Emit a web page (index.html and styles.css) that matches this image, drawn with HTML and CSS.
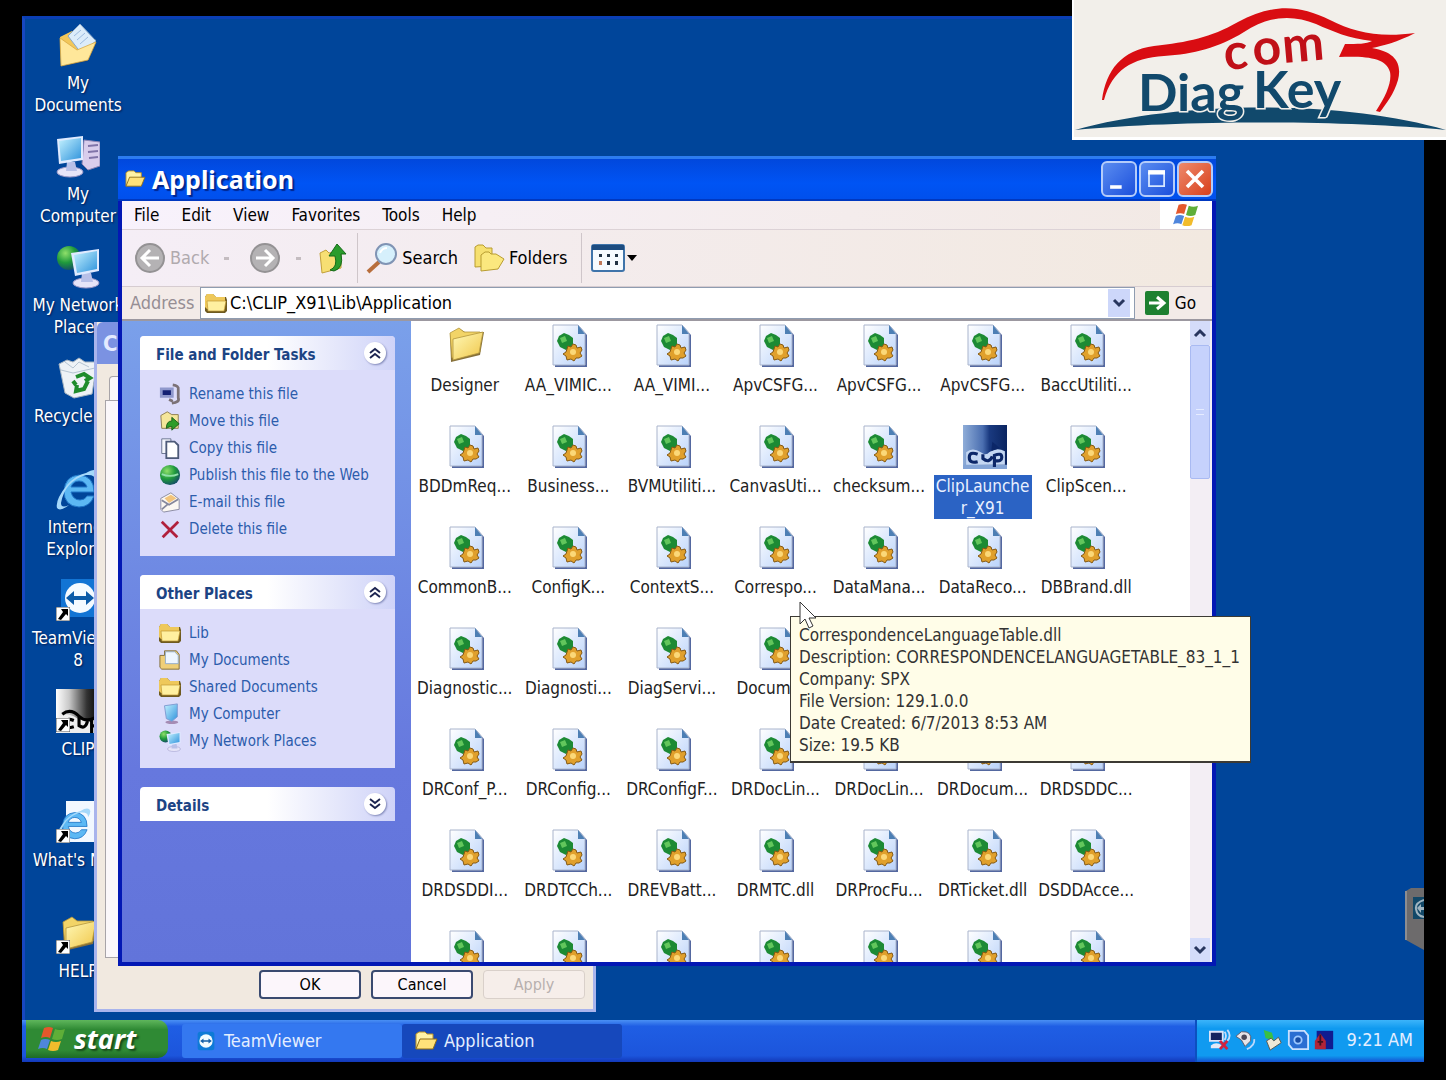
FILE: index.html
```
<!DOCTYPE html>
<html lang="en">
<head>
    <meta charset="UTF-8">
    <meta name="viewport" content="width=device-width, initial-scale=1.0">
    <title>Application</title>
    <link rel="stylesheet" href="styles.css">
</head>
<body>
    <!-- shared icons -->
    <svg class="defs" width="0" height="0" aria-hidden="true">
        <defs>
            <linearGradient id="gPage" x1="0" y1="0" x2="1" y2="1"><stop offset="0" stop-color="#ffffff"/><stop offset="1" stop-color="#b9d2fa"/></linearGradient>
            <linearGradient id="gFold" x1="0" y1="0" x2="1" y2="1"><stop offset="0" stop-color="#fff9b8"/><stop offset="1" stop-color="#f0c648"/></linearGradient>
            <linearGradient id="gScreen" x1="0" y1="0" x2="1" y2="1"><stop offset="0" stop-color="#c4f2ff"/><stop offset="1" stop-color="#2f93dc"/></linearGradient>
            <linearGradient id="gClip" x1="0" y1="0" x2="1" y2="0"><stop offset="0" stop-color="#ffffff"/><stop offset=".3" stop-color="#c8c8c8"/><stop offset=".7" stop-color="#333333"/><stop offset="1" stop-color="#000000"/></linearGradient>
            <linearGradient id="gClipSel" x1="0" y1="0" x2="1" y2="0"><stop offset="0" stop-color="#8fadd8"/><stop offset=".45" stop-color="#4a6eb0"/><stop offset=".6" stop-color="#1a3a80"/><stop offset="1" stop-color="#0a2460"/></linearGradient>
            <radialGradient id="gGlobe" cx=".35" cy=".3" r=".8"><stop offset="0" stop-color="#8fe06a"/><stop offset=".5" stop-color="#1f9a3c"/><stop offset="1" stop-color="#123f6e"/></radialGradient>
        </defs>
        <symbol id="dll" viewBox="0 0 36 44">
            <path d="M3 3h25l7 8v32H3z" fill="#5468a0"/>
            <path d="M1 1h25l7 8v32H1z" fill="url(#gPage)" stroke="#a9b4cc"/>
            <path d="M26 1l7 9h-7z" fill="#4d7fb4"/>
            <path d="M5 17l2-5 5-3 5 2 4 3v6l-2 4-5 2-6-3z" fill="#1c8a34"/>
            <path d="M8 14l5-2 2 5-5 2z" fill="#62c65c"/>
            <path d="M16 22l3 1 2-3 3 1 1 3 4-1 1 3-2 3 2 3-3 2-3 0-2 3-3-2-4 1-1-4-3-2 3-2z" fill="#e0a02c" stroke="#855a14" stroke-width="1"/>
            <circle cx="21" cy="28" r="3" fill="#fbd878"/>
        </symbol>
        <symbol id="folder" viewBox="0 0 36 36">
            <path d="M1 7l10-5 5 3 19 0-4 23-29 7z" fill="#86703a"/>
            <path d="M1 6l9-5 5 4 16 0 0 20-28 6z" fill="#f2d467" stroke="#b3953c" stroke-width=".8"/>
            <path d="M4 12l30-7-4 21-26 7z" fill="url(#gFold)" stroke="#b3953c" stroke-width=".8"/>
        </symbol>
        <symbol id="folderSm" viewBox="0 0 24 20">
            <path d="M1 4l2-3h6l3 3h10l1 3v11l-2 2H3l-2-2z" fill="#6e5a20"/>
            <path d="M1 4l2-3h6l3 3h9v12H3l-2-2z" fill="#eec85a"/>
            <path d="M3 8h19l-2 10H4z" fill="#fff0a0" stroke="#c09a34" stroke-width=".7"/>
        </symbol>
        <symbol id="openFolder" viewBox="0 0 24 20">
            <path d="M2 18V3l3-2h6l2 2h6v5" fill="#fff2a6" stroke="#bb9224"/>
            <path d="M2 18L6 8h17l-4 10z" fill="#ffe27a" stroke="#8d6c18"/>
        </symbol>
        <symbol id="envelope" viewBox="0 0 40 44">
            <path d="M3 15l20-13 15 18-8 18-25 5z" fill="#20325c" opacity=".6"/>
            <path d="M2 14L14 8l24 9-8 19-27 6z" fill="#f2c75a"/>
            <path d="M10 13L22 1l16 17-15 12z" fill="#dcecfa" stroke="#8aa8c8"/>
            <path d="M16 13l7-6M19 17l8-7M22 21l8-7" stroke="#9dbbe0"/>
            <path d="M2 15l17 12L38 19l-8 18-27 6z" fill="#ffe79a" stroke="#d9a943" stroke-width=".8"/>
        </symbol>
        <symbol id="computer" viewBox="0 0 44 44">
            <path d="M28 6l16 2v24l-12 4-6-6z" fill="#d9cdec" stroke="#8c84b4"/>
            <path d="M32 12l10-1M32 18l10-1M33 24l9-1" stroke="#8074a8" stroke-width="2"/>
            <ellipse cx="14" cy="38" rx="13" ry="5" fill="#e6e4f8" stroke="#9a98c8"/>
            <path d="M11 28h8l2 9h-11z" fill="#b8c0e8"/>
            <path d="M1 5l26-3v24L3 30z" fill="#dfeaff"/>
            <path d="M3 7l22-3v20L5 27z" fill="url(#gScreen)"/>
        </symbol>
        <symbol id="network" viewBox="0 0 44 44">
            <circle cx="13" cy="13" r="12" fill="url(#gGlobe)"/>
            <ellipse cx="30" cy="38" rx="13" ry="5" fill="#e6e4f8" stroke="#9a98c8"/>
            <path d="M26 28h9l2 9H25z" fill="#b8c0e8"/>
            <path d="M15 8l28-4v22l-24 5z" fill="#dfeaff"/>
            <path d="M18 10l23-4v18l-20 4z" fill="url(#gScreen)"/>
        </symbol>
        <symbol id="bin" viewBox="0 0 44 44">
            <path d="M3 8l8-4 6 2 6-4 6 4 12 0-5 32-18 4-9-5z" fill="#eef2f6" stroke="#a4b2c0"/>
            <path d="M5 14l12 3 22-5M9 6l8 6 6-6 10 5" stroke="#b5c4d2" fill="none"/>
            <path d="M20 21l8-3 6 4-5 3M32 25l-4 8-8 2 1-6M20 29l-3-4" fill="none" stroke="#1f8c2c" stroke-width="4"/>
        </symbol>
        <symbol id="ie" viewBox="0 0 44 44">
            <path d="M38 25H15q2 8 9 8 5 0 7-4h7q-4 11-15 11Q8 39 8 24 9 9 23 8q15 1 15 17zM15 20h16q-2-6-8-6t-8 6z" fill="#5cb8f4" stroke="#2076c8"/>
            <path d="M30 6q10-6 12 0 0 4-3 8 1-7-9-6Q9 14 5 36q0 6 8 2-9 7-12 3Q-1 33 11 18 20 8 30 6z" fill="#a5d8fa"/>
        </symbol>
        <symbol id="teamviewer" viewBox="0 0 44 44">
            <rect x="5" y="1" width="38" height="38" fill="#1274d4"/>
            <circle cx="24" cy="20" r="15" fill="#f4faff"/>
            <path d="M10 20l8-7v5h12v-5l8 7-8 7v-5H18v5z" fill="#0c5ba8"/>
        </symbol>
        <symbol id="arrow" viewBox="0 0 14 14">
            <path d="M0 0h14v14H0z" fill="#fff" stroke="#555"/>
            <path d="M5 2h7v7l-2-2-5 6-3-1 5-7z" fill="#000"/>
        </symbol>
        <symbol id="clip" viewBox="0 0 42 42">
            <path d="M0 0h42v42H0z" fill="url(#gClip)"/>
            <path d="M0 30q8-10 20-2 8 4 22 0v14H0z" fill="#eee"/>
            <path d="M6 24q8-6 16 2t20-2M17 30q-8-3-9 3t9 3M22 26v9q6 4 8-4M34 42V29q6-3 7 2 0 5-6 4" fill="none" stroke="#000" stroke-width="3"/>
        </symbol>
        <symbol id="clipSel" viewBox="0 0 42 42">
            <path d="M0 0h42v42H0z" fill="url(#gClipSel)"/>
            <path d="M0 38h42v4H0z" fill="#83a4d6"/>
            <path d="M3 26q6-5 14 0 5 4 8 0 7-5 15-1v13H3z" fill="#c4d7f2"/>
            <path d="M14 28q-8-3-8 3t8 4M19 28v4q6 5 9-2M30 40V29q7-3 7 2 0 4-6 3" fill="none" stroke="#0c2768" stroke-width="3"/>
            <path d="M28 16l7 6-8 3z" fill="#0c2768"/>
        </symbol>
        <symbol id="flag" viewBox="0 0 28 26">
            <path d="M6 2q5-2 9 0l-3 10q-4-2-9 0z" fill="#e4582c"/>
            <path d="M17 3q5 2 10 0l-3 10q-5 2-10 0z" fill="#5fae38"/>
            <path d="M3 14q4-2 9 0l-3 9q-4-2-9 0z" fill="#4f86dc"/>
            <path d="M13 15q5 2 10 0l-3 9q-5 2-10 0z" fill="#f2bc2c"/>
        </symbol>
        <symbol id="up" viewBox="0 0 20 20"><path d="M5 10l5-4 5 4M5 15l5-4 5 4" fill="none" stroke="#1c2450" stroke-width="2"/></symbol>
        <symbol id="chev" viewBox="0 0 16 16"><path d="M3 5l5 5 5-5" fill="none" stroke="#28365e" stroke-width="3"/></symbol>
    </svg>

    <div class="screen">
        <main class="desktop">
            <ul class="shortcuts">
                <li><svg><use href="#envelope"/></svg><span>My Documents</span></li>
                <li><svg><use href="#computer"/></svg><span>My Computer</span></li>
                <li><svg><use href="#network"/></svg><span>My Network Places</span></li>
                <li><svg><use href="#bin"/></svg><span>Recycle Bin</span></li>
                <li><svg><use href="#ie"/></svg><span>Internet Explorer</span></li>
                <li><svg viewBox="0 0 44 44"><use href="#teamviewer"/><use href="#arrow" y="29" width="14" height="14"/></svg><span>TeamViewer 8</span></li>
                <li><svg viewBox="0 0 44 44"><use href="#clip" width="44" height="44"/><use href="#arrow" y="29" width="14" height="14"/></svg><span>CLIP</span></li>
                <li><svg viewBox="0 0 44 44"><path d="M10 1h28l5 5v36H10z" fill="#f2f8ff"/><use href="#ie" y="6" width="36" height="36"/><use href="#arrow" y="29" width="14" height="14"/></svg><span>What's New</span></li>
                <li><svg viewBox="0 0 44 44"><use href="#folder" x="6" y="5" width="36" height="36"/><use href="#arrow" y="29" width="14" height="14"/></svg><span>HELP</span></li>
            </ul>

            <!-- dialog behind the explorer window -->
            <section class="dialog">
                <h2 class="dialog-title">C</h2>
                <div class="dialog-body">
                    <div class="tab"></div>
                    <div class="page"></div>
                    <div class="dialog-buttons">
                        <button type="button">OK</button>
                        <button type="button">Cancel</button>
                        <button type="button" disabled>Apply</button>
                    </div>
                </div>
            </section>

            <section class="window">
                <header class="titlebar">
                    <svg class="title-icon"><use href="#openFolder"/></svg>
                    <h1>Application</h1>
                    <button type="button" class="cap" aria-label="Minimize"><svg viewBox="0 0 36 36"><path d="M8 25h13v4H8z" fill="#fff"/></svg></button>
                    <button type="button" class="cap" aria-label="Maximize"><svg viewBox="0 0 36 36"><path d="M9 11h17v15H9z" fill="none" stroke="#d6e6ff" stroke-width="2"/><path d="M8 8h19v5H8z" fill="#fff"/></svg></button>
                    <button type="button" class="cap close" aria-label="Close"><svg viewBox="0 0 36 36"><path d="M9 9l18 18M27 9L9 27" stroke="#fff" stroke-width="4"/></svg></button>
                </header>

                <nav class="menubar">
                    <button type="button">File</button>
                    <button type="button">Edit</button>
                    <button type="button">View</button>
                    <button type="button">Favorites</button>
                    <button type="button">Tools</button>
                    <button type="button">Help</button>
                    <span class="brand"><svg><use href="#flag"/></svg></span>
                </nav>

                <div class="toolbar">
                    <button type="button" class="back" disabled>
                        <svg class="ico32" viewBox="0 0 32 32"><circle cx="16" cy="16" r="14" fill="#b4b2b4" stroke="#949294" stroke-width="2"/><path d="M25 16H9M16 8l-8 8 8 8" fill="none" stroke="#fff" stroke-width="3"/></svg>
                        Back <i></i>
                    </button>
                    <button type="button" class="forward" disabled aria-label="Forward">
                        <svg class="ico32" viewBox="0 0 32 32"><circle cx="16" cy="16" r="14" fill="#b4b2b4" stroke="#949294" stroke-width="2"/><path d="M7 16h16M16 8l8 8-8 8" fill="none" stroke="#fff" stroke-width="3"/></svg>
                        <i></i>
                    </button>
                    <button type="button" class="up" aria-label="Up">
                        <svg class="ico32" viewBox="0 0 32 32"><path d="M3 11l6-3 3 3 12-2v17L5 31z" fill="#f7df73" stroke="#c2a03a"/><path d="M13 28q8-3 5-14h-6L20 2l9 10h-5q3 14-7 17z" fill="#2a9c2c" stroke="#146a18"/></svg>
                    </button>
                    <span class="sep"></span>
                    <button type="button" class="search">
                        <svg class="ico32" viewBox="0 0 32 32"><path d="M13 20L2 30" stroke="#b86e3c" stroke-width="4"/><circle cx="20" cy="12" r="10" fill="#d6f0fc" stroke="#8094b4" stroke-width="2"/><path d="M14 11q2-5 7-5" fill="none" stroke="#fff" stroke-width="2"/></svg>
                        Search
                    </button>
                    <button type="button" class="folders">
                        <svg class="ico32" viewBox="0 0 32 32"><path d="M2 25V5l3-2h5l3 3h6v18z" fill="#f6e070" stroke="#b89c30"/><path d="M8 29V13l4-3h4l2 2h5l8 5-6 10z" fill="#fbe87e" stroke="#b89c30"/></svg>
                        Folders
                    </button>
                    <span class="sep"></span>
                    <button type="button" class="views" aria-label="Views">
                        <svg class="views-icon" viewBox="0 0 46 28"><rect x="1" y="1" width="32" height="26" rx="2" fill="#f6fbff" stroke="#3f74aa" stroke-width="2"/><path d="M1 1h32v5H1z" fill="#1d4c80"/><path d="M8 10h3v3H8zM16 10h3v3h-3zM24 10h3v3h-3zM16 17h3v4h-3zM24 17h3v4h-3z" fill="#234"/><path d="M8 17h3v4H8z" fill="#c07858"/><path d="M36 11h10l-5 6z" fill="#000"/></svg>
                    </button>
                </div>

                <form class="address">
                    <label for="path">Address</label>
                    <div class="address-box">
                        <svg class="ico24"><use href="#folderSm"/></svg>
                        <input type="text" id="path" value="C:\CLIP_X91\Lib\Application">
                        <button type="button" class="drop" aria-label="Show addresses"><svg><use href="#chev"/></svg></button>
                    </div>
                    <button type="button" class="go"><svg viewBox="0 0 24 24"><rect width="24" height="24" rx="2" fill="#1d8030"/><path d="M4 12h13M12 6l7 6-7 6" fill="none" stroke="#fff" stroke-width="3"/></svg>Go</button>
                </form>

                <div class="content">
                    <aside class="sidebar">
                        <section class="group">
                            <header><h2>File and Folder Tasks</h2><button type="button" aria-label="Collapse"><svg><use href="#up"/></svg></button></header>
                            <ul>
                                <li><svg viewBox="0 0 24 24"><path d="M1 5h15v11H1z" fill="#8f98cc"/><path d="M4 8h9v5H4z" fill="#142074"/><path d="M15 2q7 1 6 5v9q2 5-7 6M15 20l-4-2" fill="none" stroke="#7c7276" stroke-width="3"/></svg><a href="#">Rename this file</a></li>
                                <li><svg viewBox="0 0 24 24"><path d="M2 6l7-4 5 3h7v15H3z" fill="#f5e69a" stroke="#8a7a4c"/><path d="M8 20q0-8 6-8V8l8 7-8 7v-4q-3 0-6 2z" fill="#2f9c28" stroke="#1b5c18"/></svg><a href="#">Move this file</a></li>
                                <li><svg viewBox="0 0 24 24"><path d="M3 2h10v16H3z" fill="#f4f6fc" stroke="#65708c"/><path d="M8 5h9l4 4v14H8z" fill="#fff" stroke="#4d5a78" stroke-width="2"/></svg><a href="#">Copy this file</a></li>
                                <li><svg viewBox="0 0 24 24"><circle cx="12" cy="12" r="11" fill="url(#gGlobe)"/><path d="M3 11q9 4 18 0" stroke="#8fe0a8" fill="none" stroke-width="2"/></svg><a href="#">Publish this file to the Web</a></li>
                                <li><svg viewBox="0 0 24 24"><path d="M2 8l11-6 9 7v11L5 23l-3-3z" fill="#fbf7f2" stroke="#85879c"/><path d="M6 8l7-4 6 4-8 5z" fill="#f2c47c"/><path d="M3 10l8 5 10-6M3 20l7-6" fill="none" stroke="#85879c" stroke-width="2"/></svg><a href="#">E-mail this file</a></li>
                                <li><svg viewBox="0 0 24 24"><path d="M3 4l17 17M21 4L4 21" stroke="#b0203c" stroke-width="3"/></svg><a href="#">Delete this file</a></li>
                            </ul>
                        </section>
                        <section class="group">
                            <header><h2>Other Places</h2><button type="button" aria-label="Collapse"><svg><use href="#up"/></svg></button></header>
                            <ul>
                                <li><svg><use href="#folderSm"/></svg><a href="#">Lib</a></li>
                                <li><svg viewBox="0 0 24 24"><path d="M1 7h5V2h13l3 4v16H3l-2-2z" fill="#efcf78" stroke="#7f6a34"/><path d="M7 3h10l4 4v9H7z" fill="#eef6ff" stroke="#8ea8c8"/></svg><a href="#">My Documents</a></li>
                                <li><svg><use href="#folderSm"/></svg><a href="#">Shared Documents</a></li>
                                <li><svg viewBox="0 0 24 24"><ellipse cx="14" cy="21" rx="7" ry="2" fill="#a58cb4"/><path d="M6 3l14-2v14l-6 5-6-3z" fill="url(#gScreen)" stroke="#7c98d0"/></svg><a href="#">My Computer</a></li>
                                <li><svg><use href="#network"/></svg><a href="#">My Network Places</a></li>
                            </ul>
                        </section>
                        <section class="group">
                            <header><h2>Details</h2><button type="button" class="down" aria-label="Expand"><svg><use href="#up"/></svg></button></header>
                        </section>
                    </aside>

                    <ul class="files">
                        <li><svg class="dir"><use href="#folder"/></svg><span>Designer</span></li>
                        <li><svg><use href="#dll"/></svg><span>AA_VIMIC...</span></li>
                        <li><svg><use href="#dll"/></svg><span>AA_VIMI...</span></li>
                        <li><svg><use href="#dll"/></svg><span>ApvCSFG...</span></li>
                        <li><svg><use href="#dll"/></svg><span>ApvCSFG...</span></li>
                        <li><svg><use href="#dll"/></svg><span>ApvCSFG...</span></li>
                        <li><svg><use href="#dll"/></svg><span>BaccUtiliti...</span></li>

                        <li><svg><use href="#dll"/></svg><span>BDDmReq...</span></li>
                        <li><svg><use href="#dll"/></svg><span>Business...</span></li>
                        <li><svg><use href="#dll"/></svg><span>BVMUtiliti...</span></li>
                        <li><svg><use href="#dll"/></svg><span>CanvasUti...</span></li>
                        <li><svg><use href="#dll"/></svg><span>checksum...</span></li>
                        <li class="selected"><svg><use href="#clipSel"/></svg><span>ClipLaunche<br>r_X91</span></li>
                        <li><svg><use href="#dll"/></svg><span>ClipScen...</span></li>

                        <li><svg><use href="#dll"/></svg><span>CommonB...</span></li>
                        <li><svg><use href="#dll"/></svg><span>ConfigK...</span></li>
                        <li><svg><use href="#dll"/></svg><span>ContextS...</span></li>
                        <li><svg><use href="#dll"/></svg><span>Correspo...</span></li>
                        <li><svg><use href="#dll"/></svg><span>DataMana...</span></li>
                        <li><svg><use href="#dll"/></svg><span>DataReco...</span></li>
                        <li><svg><use href="#dll"/></svg><span>DBBrand.dll</span></li>

                        <li><svg><use href="#dll"/></svg><span>Diagnostic...</span></li>
                        <li><svg><use href="#dll"/></svg><span>Diagnosti...</span></li>
                        <li><svg><use href="#dll"/></svg><span>DiagServi...</span></li>
                        <li><svg><use href="#dll"/></svg><span>Docume...</span></li>
                        <li><svg><use href="#dll"/></svg></li>
                        <li><svg><use href="#dll"/></svg></li>
                        <li><svg><use href="#dll"/></svg></li>

                        <li><svg><use href="#dll"/></svg><span>DRConf_P...</span></li>
                        <li><svg><use href="#dll"/></svg><span>DRConfig...</span></li>
                        <li><svg><use href="#dll"/></svg><span>DRConfigF...</span></li>
                        <li><svg><use href="#dll"/></svg><span>DRDocLin...</span></li>
                        <li><svg><use href="#dll"/></svg><span>DRDocLin...</span></li>
                        <li><svg><use href="#dll"/></svg><span>DRDocum...</span></li>
                        <li><svg><use href="#dll"/></svg><span>DRDSDDC...</span></li>

                        <li><svg><use href="#dll"/></svg><span>DRDSDDI...</span></li>
                        <li><svg><use href="#dll"/></svg><span>DRDTCCh...</span></li>
                        <li><svg><use href="#dll"/></svg><span>DREVBatt...</span></li>
                        <li><svg><use href="#dll"/></svg><span>DRMTC.dll</span></li>
                        <li><svg><use href="#dll"/></svg><span>DRProcFu...</span></li>
                        <li><svg><use href="#dll"/></svg><span>DRTicket.dll</span></li>
                        <li><svg><use href="#dll"/></svg><span>DSDDAcce...</span></li>

                        <li><svg><use href="#dll"/></svg></li>
                        <li><svg><use href="#dll"/></svg></li>
                        <li><svg><use href="#dll"/></svg></li>
                        <li><svg><use href="#dll"/></svg></li>
                        <li><svg><use href="#dll"/></svg></li>
                        <li><svg><use href="#dll"/></svg></li>
                        <li><svg><use href="#dll"/></svg></li>
                    </ul>

                    <div class="scrollbar">
                        <button type="button" class="scroll-up" aria-label="Scroll up"><svg><use href="#chev"/></svg></button>
                        <div class="thumb"><i></i></div>
                        <button type="button" class="scroll-down" aria-label="Scroll down"><svg><use href="#chev"/></svg></button>
                    </div>
                </div>
            </section>

            <div class="tooltip" role="tooltip">
                CorrespondenceLanguageTable.dll<br>
                Description: CORRESPONDENCELANGUAGETABLE_83_1_1<br>
                Company: SPX<br>
                File Version: 129.1.0.0<br>
                Date Created: 6/7/2013 8:53 AM<br>
                Size: 19.5 KB
            </div>
            <svg class="cursor" viewBox="0 0 18 28"><path d="M1 1v22l5-5 4 9 4-2-4-8h7z" fill="#fff" stroke="#333" stroke-width="1"/></svg>
            <svg class="side-tab" viewBox="0 0 20 62"><path d="M2 3L7 0h13v62L2 52z" fill="#6d6b6c"/><path d="M2 3v49" stroke="#8d8d90" stroke-width="2"/><path d="M9 9h11v22H9z" fill="#124868"/><path d="M20 12q-9 3-8 9 1 7 8 8" fill="none" stroke="#9fb4c0" stroke-width="2"/><path d="M13 20l4-4v3h3v3h-3v3z" fill="#9fb4c0"/></svg>
        </main>

        <footer class="taskbar">
            <button type="button" class="start"><svg><use href="#flag"/></svg>start</button>
            <button type="button" class="task"><svg viewBox="0 0 24 24"><rect x="2" y="1" width="20" height="22" rx="3" fill="#0e7ad6"/><circle cx="12" cy="12" r="8" fill="#f2fbff"/><path d="M5 12l4-3v2h6V9l4 3-4 3v-2H9v2z" fill="#1560a8"/></svg>TeamViewer</button>
            <button type="button" class="task active"><svg><use href="#openFolder"/></svg>Application</button>
            <div class="tray">
                <svg viewBox="0 0 24 24"><path d="M1 3h14v10H1z" fill="#142460" stroke="#dde4f8" stroke-width="2"/><path d="M2 18q6-5 12 0v3H2z" fill="#e4e8f6"/><path d="M17 3q3 4 0 9M20 1q5 6 0 12" fill="none" stroke="#c8dcf8" stroke-width="2"/><path d="M12 13l8 9M20 13l-8 9" stroke="#d02440" stroke-width="3"/></svg>
                <svg viewBox="0 0 24 24"><path d="M1 8l6-5q12-1 10 10l-6 6-4-7z" fill="#e8e4e8" stroke="#5c5868"/><circle cx="10" cy="9" r="3" fill="#4c4858"/><path d="M21 11q1 7-8 11" fill="none" stroke="#bcd8fc" stroke-width="2"/></svg>
                <svg viewBox="0 0 24 24"><path d="M3 1l9 3 2 8-9-2z" fill="#3ac044"/><path d="M6 13l5-3 3 3 5-4 3 6-12 8z" fill="#eee9d8" stroke="#5c5648"/></svg>
                <svg viewBox="0 0 24 24"><path d="M2 2h17l4 5v15H6l-4-5z" fill="#2a6ed2" stroke="#c8e0ff" stroke-width="2"/><circle cx="12" cy="12" r="4" fill="#184ca4" stroke="#9cc8ff" stroke-width="2"/></svg>
                <svg viewBox="0 0 24 24"><path d="M4 2h18v20H4z" fill="#101c90"/><path d="M2 22v-9l6-8 6 8v9z" fill="#b02438"/><path d="M8 6v12M5 14h6" stroke="#401020" stroke-width="2"/></svg>
                <time>9:21 AM</time>
            </div>
        </footer>
    </div>

    <!-- channel logo -->
    <svg class="logo" viewBox="0 0 374 140" role="img" aria-label="DiagKey com">
        <path d="M0 0h374v140H0z" fill="#fff"/>
        <path d="M2 0h372v137H2z" fill="#f2efea"/>
        <path d="M30 100C34 70 50 50 82 46C116 42 138 38 166 22C200 4 226 4 258 20C282 32 306 38 343 33C326 42 310 46 300 48C324 52 330 64 326 80C322 94 314 104 308 112L304 111C314 96 320 82 318 72C314 58 296 56 267 57L273 44C286 44 294 44 300 41C276 38 262 32 244 24C220 14 196 16 172 32C146 48 122 54 92 56C60 58 40 70 32 100z" fill="#d90d12"/>
        <path d="M3 130C110 100 270 100 374 130C270 120 110 120 3 130z" fill="#11496c"/>
        <g class="logo-com" transform="rotate(-5 154 70)">
            <text x="153" y="70">c</text>
            <text x="182" y="68">o</text>
            <text x="212" y="68">m</text>
        </g>
        <text x="66" y="111" class="logo-name">Diag</text>
        <text x="181" y="108" class="logo-name">Key</text>
    </svg>
</body>
</html>
```

FILE: styles.css
```
* {
    box-sizing: border-box;
}
html, body {
    height: 100%;
}
body {
    margin: 0;
    background: #000;
    font-family: "DejaVu Sans Condensed", "Noto Sans", sans-serif;
    font-size: 17px;
    line-height: 22px;
    overflow: hidden;
}
ul {
    list-style: none;
    margin: 0;
    padding: 0;
}
h1, h2 {
    margin: 0;
}
button, input {
    font: inherit;
    color: inherit;
    background: none;
    border: none;
    padding: 0;
    margin: 0;
}
svg {
    flex: none;
}
.defs {
    position: absolute;
}
.screen {
    height: 100%;
    padding: 16px 22px 18px;
    display: flex;
    flex-direction: column;
}
.desktop {
    position: relative;
    flex: 1;
    min-height: 0;
    background: #00459a;
    border-top: 3px solid #0a3fb4;
    border-left: 3px solid #1747c0;
}

/* desktop icons */
.shortcuts {
    width: 106px;
    padding-top: 4px;
}
.shortcuts li {
    height: 111px;
    display: flex;
    flex-direction: column;
    align-items: center;
    gap: 5px;
    text-align: center;
    color: #fff;
    text-shadow: 1px 1px 2px #001a50;
}
.shortcuts svg {
    width: 44px;
    height: 44px;
}
.shortcuts span {
    width: 100px;
}

/* dialog */
.dialog {
    position: absolute;
    left: 69px;
    top: 303px;
    bottom: 8px;
    width: 502px;
    display: flex;
    flex-direction: column;
    border: 3px solid #a9b4ec;
    border-top: none;
    background: #f1e9e0;
}
.dialog-title {
    height: 42px;
    padding: 0 6px;
    background: #7b92e2;
    border-radius: 6px 6px 0 0;
    color: #e4eaff;
    font-size: 22px;
    line-height: 44px;
}
.dialog-body {
    flex: 1;
    display: flex;
    flex-direction: column;
    padding: 12px 8px 10px;
}
.tab {
    width: 80px;
    height: 24px;
    margin-left: 4px;
    border: 1px solid #a8a4a8;
    border-bottom: none;
    border-radius: 4px 4px 0 0;
    background: #fbf7fa;
}
.page {
    flex: 1;
    border: 1px solid #a8a4a8;
    background: #fbf7fa;
}
.dialog-buttons {
    display: flex;
    justify-content: flex-end;
    gap: 10px;
    padding-top: 12px;
}
.dialog-buttons button {
    width: 102px;
    height: 29px;
    border: 2px solid #3a4a70;
    border-radius: 4px;
    background: #fcf6fb;
    font-size: 16px;
}
.dialog-buttons button:disabled {
    border: 1px solid #d9d0ca;
    background: #f6eeea;
    color: #b8b0ae;
}

/* explorer window */
.window {
    position: absolute;
    left: 93px;
    right: 208px;
    top: 137px;
    bottom: 54px;
    display: flex;
    flex-direction: column;
    border: 4px solid #0318b4;
    border-top: none;
    background: #fff;
}
.titlebar {
    display: flex;
    align-items: center;
    gap: 2px;
    height: 45px;
    margin: 0 -4px;
    padding: 0 3px 0 6px;
    border-top: 3px solid #2c7cf0;
    border-bottom: 2px solid #0038c0;
    background: linear-gradient(#0148dc, #0054f4 60%, #0050ec);
    color: #fff;
}
.title-icon {
    width: 22px;
    height: 18px;
}
.titlebar h1 {
    flex: 1;
    padding-left: 4px;
    font-family: "Noto Sans", "Open Sans", sans-serif;
    font-size: 25px;
    line-height: 40px;
    text-shadow: 2px 2px 1px #00258c;
}
.cap {
    width: 36px;
    height: 36px;
    border: 2px solid #b4ccfa;
    border-radius: 6px;
    background: linear-gradient(135deg, #5a8cf0, #1c50dc);
}
.cap svg {
    display: block;
    width: 32px;
    height: 32px;
}
.close {
    background: linear-gradient(135deg, #ee8a6c, #d8401c);
}
.menubar {
    display: flex;
    align-items: center;
    gap: 22px;
    height: 29px;
    padding-left: 12px;
    border-bottom: 1px solid #dcd2d6;
    background: linear-gradient(90deg, #f8f2fc, #f2e9e4);
}
.brand {
    display: flex;
    justify-content: center;
    align-items: center;
    width: 52px;
    height: 28px;
    margin-left: auto;
    background: #fff;
}
.brand svg {
    width: 28px;
    height: 24px;
}
.toolbar {
    display: flex;
    align-items: center;
    height: 57px;
    padding-left: 12px;
    background: linear-gradient(90deg, #f5eef6, #f2e9e0);
    border-bottom: 1px solid #d6ccd0;
    font-size: 18px;
}
.toolbar button {
    display: flex;
    align-items: center;
    gap: 4px;
}
.toolbar button:disabled {
    color: #b0aaae;
}
.toolbar i {
    width: 5px;
    height: 3px;
    margin-left: 11px;
    background: #c4bcc0;
}
.forward {
    margin-left: 20px;
}
.up {
    margin-left: 16px;
}
.ico32 {
    width: 32px;
    height: 32px;
}
.sep {
    width: 1px;
    height: 50px;
    margin: 0 8px;
    background: #cfc6ca;
}
.folders {
    margin: 0 6px 0 15px;
}
.views-icon {
    width: 48px;
    height: 28px;
}
.address {
    display: flex;
    align-items: center;
    height: 34px;
    border-bottom: 2px solid #9c98a0;
    background: #f3ebe8;
    font-size: 18px;
}
.address label {
    width: 78px;
    padding-left: 8px;
    color: #968e94;
}
.address-box {
    flex: 1;
    display: flex;
    align-items: center;
    height: 32px;
    padding: 0 4px 0 3px;
    border: 1px solid #8f9cb0;
    background: #fff;
}
.address-box input {
    flex: 1;
    min-width: 0;
    padding-left: 2px;
}
.ico24 {
    width: 24px;
    height: 20px;
}
.drop {
    width: 22px;
    height: 28px;
    background: #cdd7fa;
}
.drop svg, .scrollbar svg {
    display: block;
    width: 16px;
    height: 16px;
    margin: auto;
}
.go {
    display: flex;
    align-items: center;
    gap: 6px;
    padding: 0 16px 0 10px;
    font-size: 17px;
}
.go svg {
    width: 24px;
    height: 24px;
}
.content {
    flex: 1;
    min-height: 0;
    display: flex;
}

/* task pane */
.sidebar {
    width: 289px;
    display: flex;
    flex-direction: column;
    gap: 19px;
    padding: 15px 16px 0 18px;
    background: linear-gradient(#7aa0ea, #6678de 70%, #6274da);
    overflow: hidden;
}
.group {
    background: #dcdcfa;
    border-radius: 4px 4px 0 0;
    overflow: hidden;
    flex: none;
}
.group header {
    display: flex;
    align-items: center;
    justify-content: space-between;
    height: 34px;
    padding: 0 9px 0 16px;
    background: linear-gradient(90deg, #fff 50%, #cfd3f8);
}
.group h2 {
    padding-top: 4px;
    color: #1c4484;
    font-size: 15px;
    line-height: 22px;
}
.group header button {
    width: 22px;
    height: 22px;
    border-radius: 50%;
    background: #fff;
    box-shadow: 1px 1px 2px #8088b8;
}
.group header svg {
    display: block;
    width: 20px;
    height: 20px;
    margin: 0 auto;
}
.down svg {
    transform: rotate(180deg);
}
.group ul {
    padding: 10px 18px 14px;
}
.group li {
    display: flex;
    align-items: center;
    gap: 7px;
    height: 27px;
}
.group li svg {
    width: 24px;
    height: 22px;
}
.group a {
    color: #2c5cac;
    font-size: 15px;
    text-decoration: none;
}

/* file list */
.files {
    flex: 1;
    display: grid;
    grid-template-columns: repeat(7, 1fr);
    grid-auto-rows: 101px;
    padding: 3px 52px 0 2px;
    overflow: hidden;
    color: #222;
}
.files li {
    display: flex;
    flex-direction: column;
    align-items: center;
    min-width: 0;
    white-space: nowrap;
}
.files svg {
    width: 36px;
    height: 44px;
    margin: 0 0 6px 4px;
}
.files .dir {
    height: 42px;
    margin-bottom: 8px;
}
.files .selected svg {
    width: 44px;
}
.selected span {
    width: 98px;
    background: #2b63c4;
    color: #e8f0ff;
    text-align: center;
}
.scrollbar {
    display: flex;
    flex-direction: column;
    width: 22px;
    padding-right: 2px;
    background: #f3eef4;
}
.scrollbar button {
    height: 24px;
    background: #d4dcfa;
}
.scroll-up svg {
    transform: rotate(180deg);
}
.scroll-down {
    margin-top: auto;
}
.thumb {
    display: flex;
    align-items: center;
    justify-content: center;
    height: 134px;
    border: 1px solid #a9baf2;
    border-radius: 2px;
    background: #c6d2fc;
}
.thumb i {
    width: 8px;
    height: 6px;
    border: 1px solid #e6ecff;
    border-width: 1px 0;
}

/* overlays on the desktop */
.tooltip {
    position: absolute;
    left: 765px;
    top: 597px;
    padding: 7px 10px 5px 8px;
    border: 1px solid #3c3a34;
    border-bottom-width: 2px;
    background: #fffde8;
    color: #333;
    white-space: nowrap;
}
.cursor {
    position: absolute;
    left: 774px;
    top: 582px;
    width: 18px;
    height: 28px;
}
.side-tab {
    position: absolute;
    right: 0;
    bottom: 70px;
    width: 20px;
    height: 62px;
}

/* taskbar */
.taskbar {
    display: flex;
    align-items: stretch;
    height: 42px;
    padding-left: 4px;
    background: linear-gradient(#4a90f4, #1f5ee4 15%, #1c55dc 85%, #1238b8);
    color: #e4eeff;
    font-size: 18px;
}
.start {
    display: flex;
    align-items: center;
    gap: 8px;
    width: 142px;
    margin: 0 14px 4px 0;
    padding-left: 12px;
    border-radius: 0 10px 10px 0;
    background: linear-gradient(#5fb65c, #2f8a34 25%, #2f8a34 80%, #1d6a26);
    color: #fff;
    font-family: "Open Sans", "Noto Sans", sans-serif;
    font-size: 27px;
    font-weight: bold;
    font-style: italic;
    line-height: 30px;
    text-shadow: 2px 2px 2px #174a1a;
}
.start svg {
    width: 28px;
    height: 28px;
}
.task {
    display: flex;
    align-items: center;
    gap: 6px;
    width: 220px;
    margin: 4px 0 4px;
    padding-left: 12px;
    border-radius: 3px;
    background: #3478f0;
}
.task svg {
    width: 24px;
    height: 20px;
}
.task.active {
    background: #1648bc;
}
.tray {
    display: flex;
    align-items: center;
    gap: 2px;
    margin-left: auto;
    padding: 0 11px 2px 11px;
    border-left: 2px solid #0c50c0;
    background: linear-gradient(#3cb4fa, #109af0 20%, #109af0 85%, #1450d0);
}
.tray svg {
    width: 24px;
    height: 22px;
}
.tray time {
    padding-left: 8px;
}

.logo {
    position: absolute;
    top: 0;
    right: 0;
    width: 374px;
    height: 140px;
}
.logo text {
    font-family: "Lato", "Noto Sans", sans-serif;
    font-weight: bold;
    paint-order: stroke;
    stroke: #f2efea;
    stroke-width: 3px;
}
.logo-com {
    font-size: 50px;
    fill: #c01018;
}
.logo-name {
    font-size: 52px;
    fill: #11496c;
}
```
